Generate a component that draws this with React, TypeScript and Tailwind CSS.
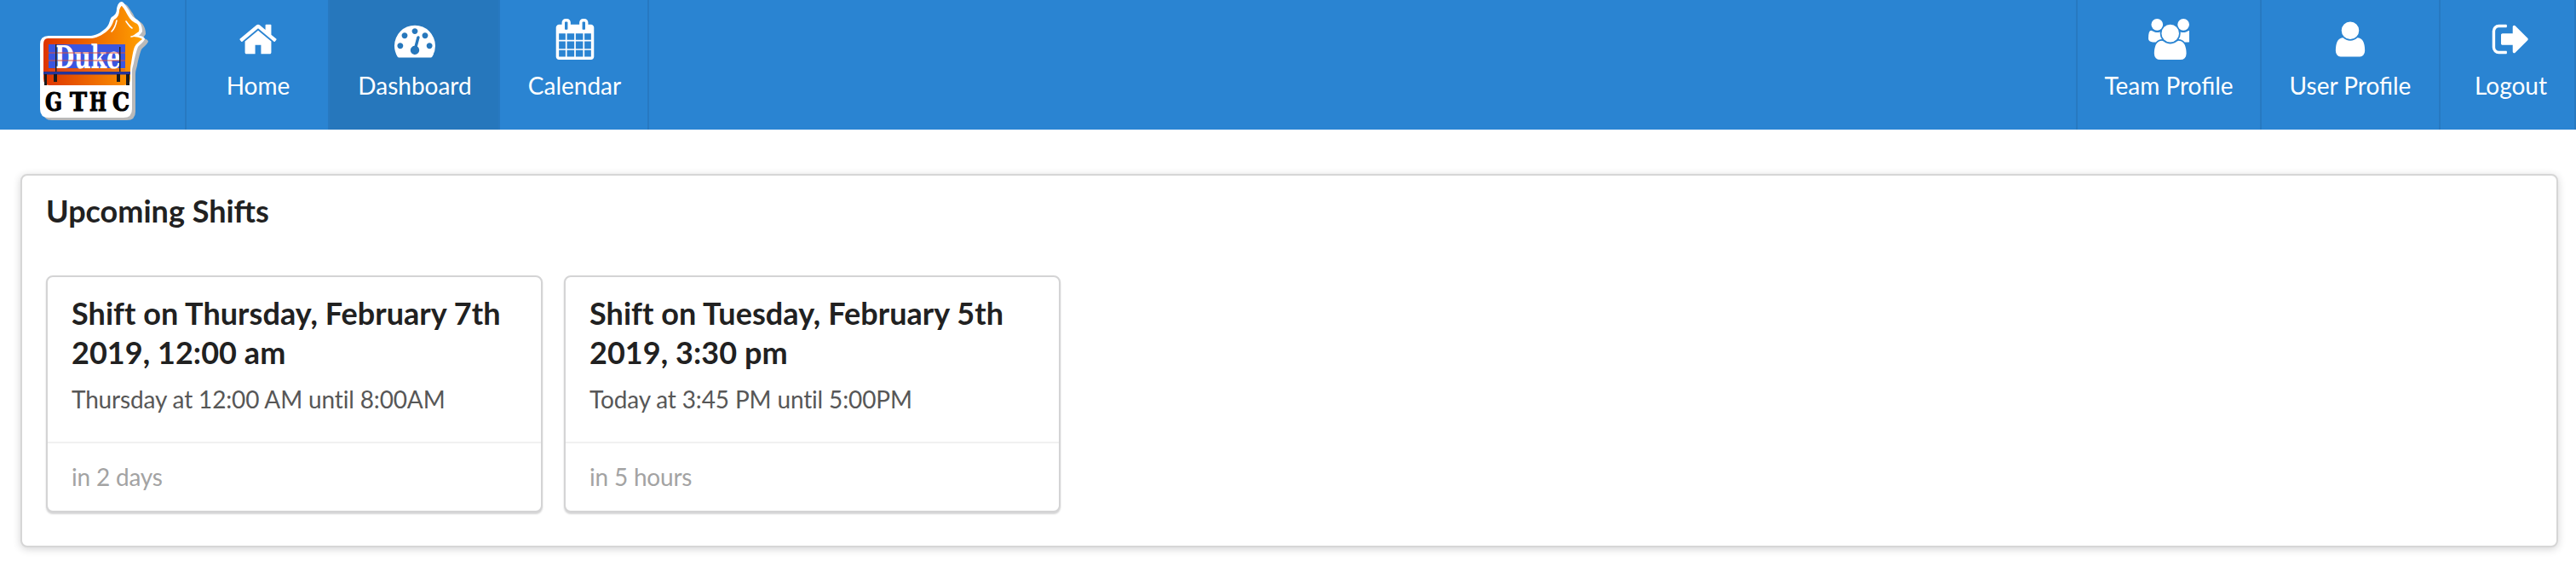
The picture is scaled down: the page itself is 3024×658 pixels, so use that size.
const icons = {
  home: 'M1472 992v480q0 26-19 45t-45 19h-384v-384h-256v384h-384q-26 0-45-19t-19-45v-480q0-1 .5-3t.5-3l575-474 575 474q1 2 1 6zm223-69l-62 74q-8 9-21 11h-3q-13 0-21-7l-692-577-692 577q-12 8-24 7-13-2-21-11l-62-74q-8-10-7-23.5t11-21.5l719-599q32-26 76-26t76 26l244 204v-195q0-14 9-23t23-9h192q14 0 23 9t9 23v408l219 182q10 8 11 21.5t-7 23.5z',
  dashboard: 'M384 1184q0-53-37.5-90.5t-90.5-37.5-90.5 37.5-37.5 90.5 37.5 90.5 90.5 37.5 90.5-37.5 37.5-90.5zm192-448q0-53-37.5-90.5t-90.5-37.5-90.5 37.5-37.5 90.5 37.5 90.5 90.5 37.5 90.5-37.5 37.5-90.5zm428 481l101-382q6-26-7.5-48.5t-38.5-29.5-48 6.5-30 39.5l-101 382q-60 5-107 43.5t-63 98.5q-20 77 20 146t117 89 146-20 89-117q16-60-6-117t-72-91zm660-33q0-53-37.5-90.5t-90.5-37.5-90.5 37.5-37.5 90.5 37.5 90.5 90.5 37.5 90.5-37.5 37.5-90.5zm-640-640q0-53-37.5-90.5t-90.5-37.5-90.5 37.5-37.5 90.5 37.5 90.5 90.5 37.5 90.5-37.5 37.5-90.5zm448 192q0-53-37.5-90.5t-90.5-37.5-90.5 37.5-37.5 90.5 37.5 90.5 90.5 37.5 90.5-37.5 37.5-90.5zm320 448q0 261-141 483-19 29-54 29h-1402q-35 0-54-29-141-221-141-483 0-182 71-348t191-286 286-191 348-71 348 71 286 191 191 286 71 348z',
  calendar: 'M192 1664h288v-288h-288v288zm352 0h320v-288h-320v288zm-352-352h288v-320h-288v320zm352 0h320v-320h-320v320zm-352-384h288v-288h-288v288zm736 736h320v-288h-320v288zm-384-736h320v-288h-320v288zm768 736h288v-288h-288v288zm-384-352h320v-320h-320v320zm-352-864v-288q0-13-9.5-22.5t-22.5-9.5h-64q-13 0-22.5 9.5t-9.5 22.5v288q0 13 9.5 22.5t22.5 9.5h64q13 0 22.5-9.5t9.5-22.5zm736 864h288v-320h-288v320zm-384-384h320v-288h-320v288zm384 0h288v-288h-288v288zm32-480v-288q0-13-9.5-22.5t-22.5-9.5h-64q-13 0-22.5 9.5t-9.5 22.5v288q0 13 9.5 22.5t22.5 9.5h64q13 0 22.5-9.5t9.5-22.5zm384-64v1280q0 52-38 90t-90 38h-1408q-52 0-90-38t-38-90v-1280q0-52 38-90t90-38h128v-96q0-66 47-113t113-47h64q66 0 113 47t47 113v96h384v-96q0-66 47-113t113-47h64q66 0 113 47t47 113v96h128q52 0 90 38t38 90z',
  users: 'M593 896q-162 5-265 128h-134q-82 0-138-40.5t-56-118.5q0-353 124-353 6 0 43.5 21t97.5 42.5 119 21.5q67 0 133-23-5 37-5 66 0 139 81 256zm1071 637q0 120-73 189.5t-194 69.5h-874q-121 0-194-69.5t-73-189.5q0-53 3.5-103.5t14-109 26.5-108.5 43-97.5 62-81 85.5-53.5 111.5-20q10 0 43 21.5t73 48 107 48 135 21.5 135-21.5 107-48 73-48 43-21.5q61 0 111.5 20t85.5 53.5 62 81 43 97.5 26.5 108.5 14 109 3.5 103.5zm-1024-1277q0 106-75 181t-181 75-181-75-75-181 75-181 181-75 181 75 75 181zm704 384q0 159-112.5 271.5t-271.5 112.5-271.5-112.5-112.5-271.5 112.5-271.5 271.5-112.5 271.5 112.5 112.5 271.5zm576 225q0 78-56 118.5t-138 40.5h-134q-103-123-265-128 81-117 81-256 0-29-5-66 66 23 133 23 59 0 119-21.5t97.5-42.5 43.5-21q124 0 124 353zm-128-609q0 106-75 181t-181 75-181-75-75-181 75-181 181-75 181 75 75 181z',
  user: 'M1536 1399q0 109-62.5 187t-150.5 78h-854q-88 0-150.5-78t-62.5-187q0-85 8.5-160.5t31.5-152 58.5-131 94-89 134.5-34.5q131 128 313 128t313-128q76 0 134.5 34.5t94 89 58.5 131 31.5 152 8.5 160.5zm-256-887q0 159-112.5 271.5t-271.5 112.5-271.5-112.5-112.5-271.5 112.5-271.5 271.5-112.5 271.5 112.5 112.5 271.5z',
  logout: 'M704 1440q0 4 1 20t.5 26.5-3 23.5-10 19.5-20.5 6.5h-320q-119 0-203.5-84.5t-84.5-203.5v-704q0-119 84.5-203.5t203.5-84.5h320q13 0 22.5 9.5t9.5 22.5q0 4 1 20t.5 26.5-3 23.5-10 19.5-20.5 6.5h-320q-66 0-113 47t-47 113v704q0 66 47 113t113 47h312l11.5 1 11.5 3 8 5.5 7 9 2 13.5zm928-544q0 26-19 45l-544 544q-19 19-45 19t-45-19-19-45v-288h-448q-26 0-45-19t-19-45v-384q0-26 19-45t45-19h448v-288q0-26 19-45t45-19 45 19l544 544q19 19 19 45z',
};

const leftItems = [
  { label: 'Home', icon: icons.home, width: 'w-[168px] pl-[2px]' },
  { label: 'Dashboard', icon: icons.dashboard, width: 'w-[200px] pl-[2px]', active: true },
  { label: 'Calendar', icon: icons.calendar, width: 'w-[175px] pl-[2px]' },
];

const rightItems = [
  { label: 'Team Profile', icon: icons.users, width: 'w-[216px]' },
  { label: 'User Profile', icon: icons.user, width: 'w-[210px]' },
  { label: 'Logout', icon: icons.logout, width: 'w-[159px] pl-[8px] border-r-0' },
];

const shifts = [
  { title: 'Shift on Thursday, February 7th 2019, 12:00 am', meta: 'Thursday at 12:00 AM until 8:00AM', when: 'in 2 days' },
  { title: 'Shift on Tuesday, February 5th 2019, 3:30 pm', meta: 'Today at 3:45 PM until 5:00PM', when: 'in 5 hours' },
];

const logoLetters = [
  { letter: 'G', x: 53 },
  { letter: 'T', x: 82 },
  { letter: 'H', x: 105 },
  { letter: 'C', x: 132 },
];

const flameOutline =
  'M57 42H107C114 41 121 37 126 31C129 27 129 22 131 20C135 18 137 15 137 10C138 5 140 2 143 2C146 3 149 9 152 13C154 18 157 21 161 23C165 26 167 31 167 37C165 40 164 41 163 42C167 42 170 44 170 46C168 50 164 52 162 55C160 60 158 68 157 74C156 78 155 80 155 84V128Q155 138 145 138H57Q47 138 47 128V52Q47 42 57 42Z';

const Logo = () => (
  <svg width="130" height="145" viewBox="45 0 130 145" className="overflow-visible">
    <defs>
      <linearGradient id="fire" x1="0" x2="1" y1="0" y2="0">
        <stop offset="0" stopColor="#dd3300" />
        <stop offset="1" stopColor="#ffa000" />
      </linearGradient>
    </defs>
    <path fill="#b9b9b9" transform="translate(4 3)" d={flameOutline} />
    <path fill="#fff" d={flameOutline} />
    <path
      fill="url(#fire)"
      d="M56 45H108C115 44 123 40 129 33C132 29 133 25 134 23C138 21 140 17 140 12C141 9 142 7 143 7C145 9 148 14 150 18C153 23 156 26 161 28C163 30 164 34 163 37C160 39 157 41 155 43C160 43 165 44 167 46C163 49 160 51 158 55C156 60 155 68 154 74C153 78 153 82 153 86V92Q153 100 145 100H58Q51 100 51 92V52Q51 45 56 45Z"
    />
    <path d="M131 37C135 33 136 29 137 24M154 43C157 42 160 42 162 42M148 25C150 28 152 31 155 33" fill="none" stroke="#fff" strokeWidth="1.6" strokeLinecap="round" />
    <rect x="57" y="52" width="90" height="28" fill="#3b56e0" />
    <text x="103" y="80" textAnchor="middle" fontFamily="'DejaVu Serif', serif" fontWeight="700" fontSize="38" fill="#fff" textLength="78" lengthAdjust="spacingAndGlyphs">Duke</text>
    <path d="M57 62H147M57 71H147M57 82H147" stroke="#d8503a" strokeWidth="1" />
    <path d="M65 52h1.5v32h-1.5zM140 55h1.5v29h-1.5z" fill="#222" />
    <rect x="51" y="84" width="102" height="3.5" fill="#26349a" />
    <path d="M63 87h4v9h-4zM137 87h4v9h-4zM52 87h3v13h-3zM148 87h4v13h-4z" fill="#1b1b1b" />
    {logoLetters.map((l) => (
      <text key={l.letter} x={l.x} y="130" fontFamily="'DejaVu Serif', serif" fontWeight="700" fontSize="30" fill="#000" stroke="#000" strokeWidth="1.2" textLength="20" lengthAdjust="spacingAndGlyphs">
        {l.letter}
      </text>
    ))}
  </svg>
);

const NavItem = ({ label, icon, width, active }: { label: string; icon: string; width: string; active?: boolean }) => (
  <a className={`flex h-full flex-col items-center border-r-2 border-[#2779c1] pt-[22px] text-[28px] leading-[40px] text-white ${width} ${active ? 'bg-[#2677bc]' : ''}`}>
    <svg width="48" height="48" viewBox="0 0 1792 1792" fill="currentColor">
      <path d={icon} />
    </svg>
    <span className="mt-[10px] whitespace-nowrap">{label}</span>
  </a>
);

const ShiftCard = ({ title, meta, when }: { title: string; meta: string; when: string }) => (
  <div className="flex h-[278px] w-[583px] flex-col rounded-lg border-2 border-[#d4d4d5] bg-white shadow-[0_2px_2px_0_#d4d4d5]">
    <div className="h-[193px] px-[28px] pt-[19px]">
      <h4 className="text-[36px] leading-[46px] font-bold tracking-[0.05px] text-[#212121]">{title}</h4>
      <p className="mt-[12px] text-[28px] leading-[40px] tracking-[-0.15px] text-[#575757]">{meta}</p>
    </div>
    <div className="flex-1 border-t-2 border-[#f1f1f1] px-[28px] pt-[19px] text-[28px] leading-[40px] tracking-[-0.2px] text-[#a3a3a3]">{when}</div>
  </div>
);

export default function App() {
  return (
    <div className="min-h-screen bg-white font-[Lato,sans-serif]">
      <nav className="flex h-[152px] justify-between bg-[#2a84d2]">
        <div className="flex h-full">
          <div className="flex h-full w-[219px] items-start border-r-2 border-[#2779c1] pl-[45px]">
            <Logo />
          </div>
          {leftItems.map((item) => (
            <NavItem key={item.label} {...item} />
          ))}
        </div>
        <div className="flex h-full border-l-2 border-[#2779c1]">
          {rightItems.map((item) => (
            <NavItem key={item.label} {...item} />
          ))}
        </div>
      </nav>
      <main className="pt-[52px] pr-[21px] pl-[24px]">
        <section className="h-[438px] rounded-lg border-2 border-[#d6d6d6] bg-white px-[28px] pt-[18px] shadow-[0_2px_10px_0_rgba(34,36,38,0.2)]">
          <h3 className="text-[36px] leading-[46px] font-bold text-[#212121]">Upcoming Shifts</h3>
          <div className="mt-[53px] flex gap-[25px]">
            {shifts.map((shift) => (
              <ShiftCard key={shift.title} {...shift} />
            ))}
          </div>
        </section>
      </main>
    </div>
  );
}
